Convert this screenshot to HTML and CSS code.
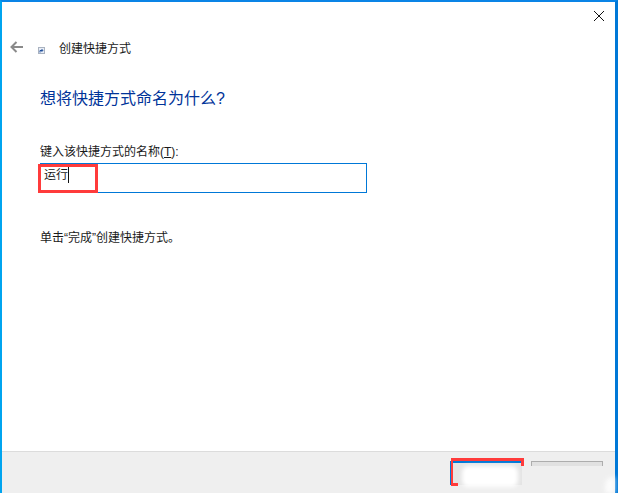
FILE: index.html
```html
<!DOCTYPE html>
<html lang="zh-CN">
<head>
  <meta charset="UTF-8" />
  <title>创建快捷方式</title>
  <link rel="stylesheet" href="styles.css">
</head>
<body>
  <div class="window">
    <div class="main">
      <div class="close-row">
        <svg class="close-icon" width="12" height="12" viewBox="0 0 12 12"><path d="M1 1L11 11M11 1L1 11" stroke="#111" stroke-width="1" fill="none"/></svg>
      </div>
      <div class="title-row">
        <svg class="back-icon" width="14" height="12" viewBox="0 0 14 12"><path d="M13 6H2M6.500 1L1.500 6L6.500 11" stroke="#8a8a8a" stroke-width="2" fill="none"/></svg>
        <svg class="shortcut-icon" width="7" height="7" viewBox="0 0 7 7"><rect x="0.500" y="0.500" width="6" height="6" fill="#e8edf5" stroke="#a9b2c0"/><path d="M2 5.500L2 3.500L4.500 3.500M3.500 2L5 3.500L3.500 4.500" stroke="#1f4f9c" stroke-width="1" fill="none"/></svg>
        <span class="title">创建快捷方式</span>
      </div>
      <h1 class="heading">想将快捷方式命名为什么?</h1>
      <label class="field-label">键入该快捷方式的名称(<u>T</u>):</label>
      <div class="name-box">
        <span class="name-text">运行</span><span class="caret"></span>
        <div class="mark mark-name"></div>
      </div>
      <p class="hint">单击“完成”创建快捷方式。</p>
    </div>
    <div class="footer">
      <div class="btn btn-primary">
        <div class="smudge"></div>
        <div class="mark mark-top"></div>
        <div class="mark mark-bottom"></div>
      </div>
      <div class="btn btn-cancel"></div>
      <div class="corner-smudge"></div>
    </div>
  </div>
</body>
</html>
```

FILE: styles.css
```css
html, body {
  margin: 0;
  height: 100%;
}
body {
  font-family: "Liberation Sans", "Noto Sans CJK SC", sans-serif;
  background: #fff;
  color: #1a1a1a;
}
.window {
  box-sizing: border-box;
  width: 618px;
  height: 493px;
  display: flex;
  flex-direction: column;
  border-top: 2px solid #0a84e6;
  border-left: 2px solid #00a4ef;
  border-right: 3px solid #0078d7;
}
.main {
  flex: 1;
}
.close-row {
  display: flex;
  justify-content: flex-end;
  padding: 8px 10px 0 0;
  height: 14px;
}
.title-row {
  display: flex;
  align-items: center;
  height: 22px;
  margin-top: 12px;
  font-size: 12px;
}
.back-icon {
  margin-left: 8px;
}
.shortcut-icon {
  margin-left: 14px;
  margin-top: 6px;
}
.title {
  margin-left: 14px;
}
.heading {
  margin: 30px 0 0 38px;
  font-size: 16px;
  font-weight: 400;
  line-height: 22px;
  color: #003399;
}
.field-label {
  display: block;
  margin: 34px 0 0 38px;
  font-size: 12px;
  line-height: 16px;
}
.name-box {
  position: relative;
  box-sizing: border-box;
  width: 327px;
  height: 30px;
  margin: 3px 0 0 38px;
  border: 1px solid #0078d7;
  padding: 3px 0 0 3px;
  font-size: 12px;
  line-height: 16px;
  display: flex;
  align-items: flex-start;
}
.caret {
  width: 1px;
  height: 16px;
  background: #111;
}
.mark {
  position: absolute;
  box-sizing: border-box;
  border: 3px solid #ff3b3b;
}
.mark-name {
  left: -3px;
  top: 0;
  width: 60px;
  height: 29px;
}
.hint {
  margin: 37px 0 0 38px;
  font-size: 12px;
  line-height: 16px;
}
.footer {
  position: relative;
  box-sizing: border-box;
  height: 42px;
  border-top: 1px solid #dcdcdc;
  background: #efefef;
  display: flex;
  justify-content: flex-end;
  gap: 9px;
  padding: 9px 12px 0 0;
}
.btn {
  box-sizing: border-box;
  position: relative;
  width: 72px;
}
.btn-primary {
  height: 24px;
  background: #e4e4e4;
  border-top: 2px solid #0078d7;
  border-left: 2px solid #0078d7;
}
.mark-top {
  left: -1px;
  top: -5px;
  width: 73px;
  height: 8px;
  border-width: 3px 3px 0 0;
}
.mark-bottom {
  left: -1px;
  top: -2px;
  width: 7px;
  height: 25px;
  border-width: 0 0 3px 2px;
}
.smudge {
  position: absolute;
  left: 10px;
  top: 3px;
  width: 56px;
  height: 21px;
  background: #fff;
  border-radius: 6px;
  filter: blur(2px);
}
.btn-cancel {
  height: 5px;
  background: #e1e1e1;
  border: 1px solid #adadad;
  border-bottom: none;
}
.corner-smudge {
  position: absolute;
  right: 0;
  bottom: 0;
  width: 10px;
  height: 16px;
  background: #fff;
  border-radius: 8px 0 0 0;
  filter: blur(2px);
  opacity: 0.8;
}
```
